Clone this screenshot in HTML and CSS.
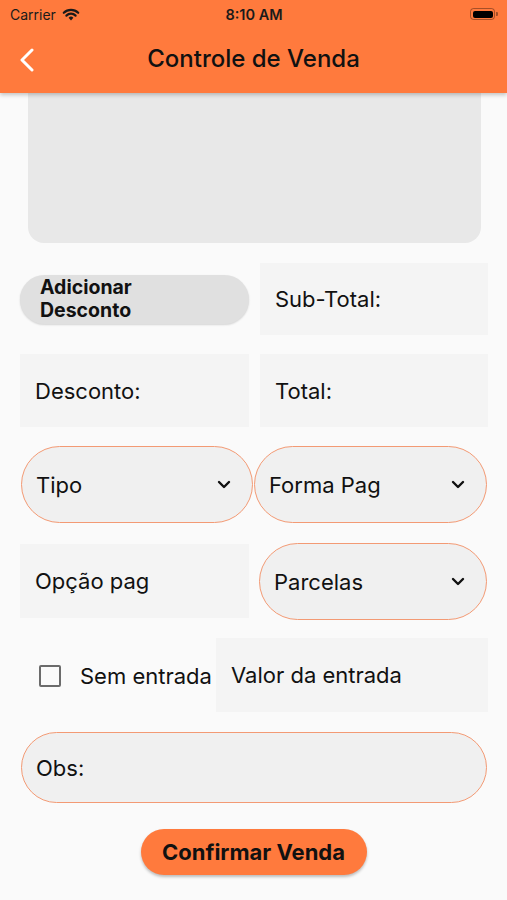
FILE: index.html
```html
<!DOCTYPE html>
<html lang="pt">
<head>
  <meta charset="UTF-8" />
  <title>Controle de Venda</title>
  <link rel="stylesheet" href="styles.css">
</head>
<body>
  <header class="topbar">
    <div class="status">
      <div class="status-left">
        <span>Carrier</span>
        <svg class="wifi" width="18" height="13" viewBox="0 0 18 13">
          <path d="M9 12.5 L6.6 9.8 A3.4 3.4 0 0 1 11.4 9.8 Z" fill="#1a1a1a"/>
          <path d="M4.4 7.6 A6.5 6.5 0 0 1 13.6 7.6" stroke="#1a1a1a" stroke-width="2.2" fill="none" stroke-linecap="round"/>
          <path d="M1.8 4.8 A10.2 10.2 0 0 1 16.2 4.8" stroke="#1a1a1a" stroke-width="2.2" fill="none" stroke-linecap="round"/>
        </svg>
      </div>
      <span class="clock">8:10 AM</span>
      <div class="status-right">
        <div class="battery"><div class="battery-fill"></div></div>
      </div>
    </div>
    <div class="nav">
      <svg class="back" width="16" height="24" viewBox="0 0 16 24">
        <path d="M13 2 L3 12 L13 22" stroke="#fff" stroke-width="3" fill="none" stroke-linecap="round" stroke-linejoin="round"/>
      </svg>
      <h1>Controle de Venda</h1>
    </div>
  </header>

  <main class="content">
    <div class="items-box"></div>

    <div class="row row-totals row-first">
      <div class="cell-btn">
        <button class="btn-desconto">Adicionar<br>Desconto</button>
      </div>
      <div class="field">Sub-Total:</div>
    </div>

    <div class="row row-totals">
      <div class="field">Desconto:</div>
      <div class="field">Total:</div>
    </div>

    <div class="row row-selects">
      <div class="select">Tipo
        <svg class="chev" width="14" height="9" viewBox="0 0 14 9"><path d="M2 2 L7 7 L12 2" stroke="#111" stroke-width="2.4" fill="none" stroke-linecap="round" stroke-linejoin="round"/></svg>
      </div>
      <div class="select">Forma Pag
        <svg class="chev" width="14" height="9" viewBox="0 0 14 9"><path d="M2 2 L7 7 L12 2" stroke="#111" stroke-width="2.4" fill="none" stroke-linecap="round" stroke-linejoin="round"/></svg>
      </div>
    </div>

    <div class="row row-opcao">
      <div class="field field-opcao">Opção pag</div>
      <div class="select">Parcelas
        <svg class="chev" width="14" height="9" viewBox="0 0 14 9"><path d="M2 2 L7 7 L12 2" stroke="#111" stroke-width="2.4" fill="none" stroke-linecap="round" stroke-linejoin="round"/></svg>
      </div>
    </div>

    <div class="row row-entrada">
      <label class="check">
        <span class="box"></span>
        <span>Sem entrada</span>
      </label>
      <div class="field">Valor da entrada</div>
    </div>

    <div class="obs">Obs:</div>

    <div class="actions">
      <button class="btn-confirmar">Confirmar Venda</button>
    </div>
  </main>
</body>
</html>
```

FILE: styles.css
```css
* {
  box-sizing: border-box;
}

body {
  margin: 0;
  background: #fafafa;
  font-family: "Inter", "Roboto", sans-serif;
  color: #111;
  width: 507px;
  height: 900px;
  overflow: hidden;
}

.topbar {
  background: #ff7a3d;
  height: 93px;
  box-shadow: 0 2px 4px rgba(0,0,0,0.22);
  position: relative;
  z-index: 2;
}

.status {
  height: 28px;
  display: grid;
  grid-template-columns: 1fr auto 1fr;
  align-items: center;
  padding: 0 9px 0 10px;
  font-size: 14px;
  color: #1a1a1a;
}

.status-left {
  display: flex;
  align-items: center;
  gap: 6px;
}

.status-right {
  display: flex;
  justify-content: flex-end;
}

.clock {
  font-weight: 600;
  font-size: 14.5px;
}

.battery {
  width: 25px;
  height: 12px;
  border: 1px solid rgba(0,0,0,0.35);
  border-radius: 3.5px;
  padding: 1.5px;
  position: relative;
  margin-right: 3px;
}

.battery::after {
  content: "";
  position: absolute;
  right: -4px;
  top: 3px;
  width: 2px;
  height: 4px;
  background: rgba(0,0,0,0.35);
  border-radius: 0 1px 1px 0;
}

.battery-fill {
  width: 100%;
  height: 100%;
  background: #000;
  border-radius: 2px;
}

.nav {
  height: 65px;
  display: flex;
  align-items: center;
  position: relative;
}

.back {
  margin-left: 19px;
  margin-top: -2px;
}

.nav h1 {
  margin: 0;
  font-size: 24px;
  font-weight: 500;
  position: absolute;
  left: 0;
  right: 0;
  text-align: center;
  top: 16px;
  pointer-events: none;
}

.content {
  padding: 0 19px 0 20px;
}

.items-box {
  background: #e8e8e8;
  height: 150px;
  margin: 0 7px 0 8px;
  border-radius: 0 0 16px 16px;
}

.row {
  display: grid;
  margin-top: 19px;
  height: 73px;
}

.row-totals {
  grid-template-columns: 229px 228px;
  column-gap: 11px;
}

.row-first {
  margin-top: 20px;
  height: 72px;
}

.field {
  background: #f4f4f4;
  display: flex;
  align-items: center;
  padding-left: 15px;
  font-size: 22px;
}

.cell-btn {
  display: flex;
  align-items: center;
}

.btn-desconto {
  width: 229px;
  height: 49px;
  border: none;
  border-radius: 25px;
  background: #e0e0e0;
  box-shadow: 0 1px 2px rgba(0,0,0,0.15);
  font-family: inherit;
  font-size: 19.5px;
  font-weight: 700;
  line-height: 23px;
  text-align: left;
  padding: 0 0 0 20px;
  color: #111;
}

.select {
  background: #f0f0f0;
  border: 1.5px solid #f39a74;
  border-radius: 40px;
  display: flex;
  align-items: center;
  justify-content: space-between;
  padding: 0 21px 0 14px;
  font-size: 22px;
}

.row-selects {
  grid-template-columns: 232px 233px;
  column-gap: 1px;
  height: 77px;
  padding-left: 1px;
}

.row-opcao {
  grid-template-columns: 229px 228px;
  column-gap: 10px;
  margin-top: 20px;
  height: 77px;
}

.field-opcao {
  margin: 1px 0 2px;
}

.row-entrada {
  grid-template-columns: 196px 272px;
  margin-top: 18px;
  height: 74px;
}

.check {
  display: flex;
  align-items: center;
  gap: 19px;
  font-size: 22px;
  padding-left: 19px;
  margin-top: 2px;
  white-space: nowrap;
}

.check .box {
  flex: none;
  width: 22px;
  height: 22px;
  border: 2px solid #6b6b6b;
  border-radius: 2px;
}

.obs {
  margin: 20px 1px 0 1px;
  height: 71px;
  background: #f0f0f0;
  border: 1.5px solid #f39a74;
  border-radius: 36px;
  display: flex;
  align-items: center;
  padding-left: 14px;
  font-size: 22px;
}

.actions {
  display: flex;
  justify-content: center;
  margin-top: 26px;
  padding-right: 1px;
}

.btn-confirmar {
  width: 226px;
  height: 46px;
  border: none;
  border-radius: 23px;
  background: #ff7a3d;
  box-shadow: 0 2px 3px rgba(0,0,0,0.25);
  font-family: inherit;
  font-size: 22px;
  font-weight: 700;
  color: #111;
}
```
